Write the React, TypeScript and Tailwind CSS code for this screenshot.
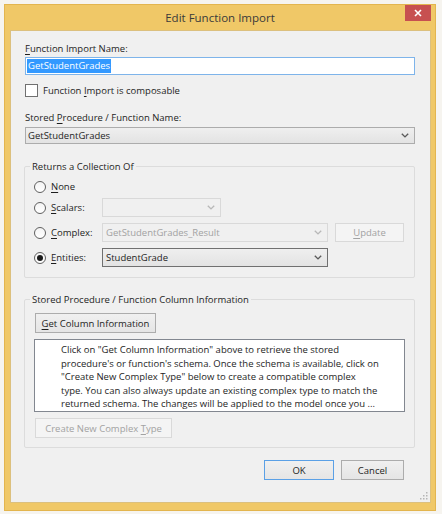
import React from "react";

const font = { fontFamily: '"Open Sans", "Noto Sans", sans-serif' };

function Chevron({ color = "#5a5a5a" }: { color?: string }) {
  return (
    <svg width="8" height="5" viewBox="0 0 8 5" className="shrink-0">
      <path d="M0.8 0.8 L4 3.9 L7.2 0.8" fill="none" stroke={color} strokeWidth="1.4" />
    </svg>
  );
}

function U({ children }: { children: React.ReactNode }) {
  return <span className="underline underline-offset-[1.5px] decoration-[0.8px]">{children}</span>;
}

function Radio({ checked }: { checked?: boolean }) {
  return (
    <div className="w-[12px] h-[12px] rounded-full border border-[#5f5f5f] bg-gradient-to-b from-[#f4f4f4] to-[#ffffff] flex items-center justify-center shrink-0">
      {checked && <div className="w-[6px] h-[6px] rounded-full bg-[#1a1a1a]" />}
    </div>
  );
}

export default function App() {
  return (
    <div
      className="w-[442px] h-[514px] bg-[#f6f4ef] pt-[4px] pl-[4px] text-[9.5px] text-[#1e1e1e] leading-[13px]"
      style={font}
    >
      <div className="w-[432px] h-[507px] bg-[#f0c867] border border-[#e3b54e] flex flex-col">
        {/* title bar */}
        <div className="h-[25px] shrink-0 flex items-start relative">
          <div className="flex-1 text-center text-[11.5px] text-[#3a3a3a] pt-[5px] leading-[15px]">
            Edit Function Import
          </div>
          <div className="absolute right-[4px] top-0 w-[26px] h-[16px] bg-[#c75050] flex items-center justify-center">
            <svg width="8" height="8" viewBox="0 0 8 8">
              <path d="M1 1 L7 7 M7 1 L1 7" stroke="#ffffff" strokeWidth="1.6" />
            </svg>
          </div>
        </div>
        {/* client */}
        <div className="ml-[5px] w-[421px] h-[473px] bg-[#f0f0f0] border border-[#dcc07e] pl-[14px] flex flex-col relative">
          <div className="mt-[11px] h-[13px]">
            <U>F</U>unction Import Name:
          </div>
          <div className="mt-[2px] w-[390px] h-[18px] bg-white border border-[#7eb4ea] flex items-center pl-[1px]">
            <span className="bg-[#3399ff] text-white h-[14px] leading-[14px] px-[1px]">GetStudentGrades</span>
          </div>
          <div className="mt-[9px] h-[13px] flex items-center gap-[4px]">
            <div className="w-[13px] h-[13px] border border-[#707070] bg-white shrink-0" />
            <span className="ml-[1px]">
              Function <U>I</U>mport is composable
            </span>
          </div>
          <div className="mt-[14px] h-[13px]">
            Stored <U>P</U>rocedure / Function Name:
          </div>
          <div className="mt-[3px] w-[390px] h-[17px] border border-[#acacac] bg-gradient-to-b from-[#efefef] to-[#e3e3e3] flex items-center justify-between pl-[2px] pr-[5px]">
            <span>GetStudentGrades</span>
            <Chevron />
          </div>

          {/* group 1 */}
          <fieldset className="mt-[16px] -ml-[1px] w-[391px] border border-[#dcdcdc] rounded-[2px] pb-[10px]">
            <legend className="ml-[5px] px-[2px] h-[13px]">Returns a Collection Of</legend>
            <div className="flex flex-col pl-[9px] pt-[4px]">
              <div className="h-[19px] flex items-center">
                <Radio />
                <span className="ml-[5px]">
                  <U>N</U>one
                </span>
              </div>
              <div className="mt-[2px] h-[19px] flex items-center">
                <Radio />
                <span className="ml-[5px] w-[51px]">
                  <U>S</U>calars:
                </span>
                <div className="w-[119px] h-[19px] border border-[#d9d9d9] bg-[#f0f0f0] flex items-center justify-end pr-[5px]">
                  <Chevron color="#b8b8b8" />
                </div>
              </div>
              <div className="mt-[6px] h-[19px] flex items-center">
                <Radio />
                <span className="ml-[5px] w-[51px]">
                  <U>C</U>omplex:
                </span>
                <div className="w-[226px] h-[19px] border border-[#d9d9d9] bg-[#f0f0f0] flex items-center justify-between pl-[3px] pr-[5px] text-[#a2a2a2]">
                  <span>GetStudentGrades_Result</span>
                  <Chevron color="#b8b8b8" />
                </div>
                <div className="ml-[7px] w-[69px] h-[19px] border border-[#d9d9d9] bg-[#f4f4f4] flex items-center justify-center text-[#a2a2a2]">
                  <span>
                    <U>U</U>pdate
                  </span>
                </div>
              </div>
              <div className="mt-[6px] h-[19px] flex items-center">
                <Radio checked />
                <span className="ml-[5px] w-[51px]">
                  <U>E</U>ntities:
                </span>
                <div className="w-[226px] h-[19px] border border-[#707070] bg-gradient-to-b from-[#efefef] to-[#e3e3e3] flex items-center justify-between pl-[3px] pr-[5px]">
                  <span>StudentGrade</span>
                  <Chevron />
                </div>
              </div>
            </div>
          </fieldset>

          {/* group 2 */}
          <fieldset className="mt-[15px] -ml-[1px] w-[391px] border border-[#dcdcdc] rounded-[2px] pb-[9px]">
            <legend className="ml-[5px] px-[2px] h-[13px]">Stored Procedure / Function Column Information</legend>
            <div className="flex flex-col pl-[10px] pt-[7px]">
              <div className="w-[121px] h-[20px] border border-[#acacac] bg-gradient-to-b from-[#f0f0f0] to-[#e5e5e5] flex items-center justify-center">
                <span>
                  <U>G</U>et Column Information
                </span>
              </div>
              <div className="mt-[6px] -ml-[1px] w-[371px] h-[73px] bg-white border border-[#828790] pl-[26px] pt-[3px] leading-[13.6px] whitespace-nowrap">
                <div>Click on "Get Column Information" above to retrieve the stored</div>
                <div>procedure's or function's schema. Once the schema is available, click on</div>
                <div>"Create New Complex Type" below to create a compatible complex</div>
                <div>type. You can also always update an existing complex type to match the</div>
                <div>returned schema. The changes will be applied to the model once you ...</div>
              </div>
              <div className="mt-[6px] w-[137px] h-[20px] border border-[#d9d9d9] bg-[#f4f4f4] flex items-center justify-center text-[#a2a2a2]">
                <span>
                  Create New Complex <U>T</U>ype
                </span>
              </div>
            </div>
          </fieldset>

          <div className="mt-[12px] flex justify-end pr-[26px] gap-[7px]">
            <div className="w-[70px] h-[20px] border border-[#5aa0e6] bg-gradient-to-b from-[#f0f0f0] to-[#e5e5e5] flex items-center justify-center">
              OK
            </div>
            <div className="w-[63px] h-[20px] border border-[#acacac] bg-gradient-to-b from-[#f0f0f0] to-[#e5e5e5] flex items-center justify-center">
              Cancel
            </div>
          </div>

          {/* resize grip */}
          <svg width="8" height="8" viewBox="0 0 8 8" className="absolute right-[2px] bottom-[2px]">
            <rect x="6" y="0" width="1.5" height="1.5" fill="#b5b5b5" />
            <rect x="3" y="3" width="1.5" height="1.5" fill="#b5b5b5" />
            <rect x="6" y="3" width="1.5" height="1.5" fill="#b5b5b5" />
            <rect x="0" y="6" width="1.5" height="1.5" fill="#b5b5b5" />
            <rect x="3" y="6" width="1.5" height="1.5" fill="#b5b5b5" />
            <rect x="6" y="6" width="1.5" height="1.5" fill="#b5b5b5" />
          </svg>
        </div>
      </div>
    </div>
  );
}
